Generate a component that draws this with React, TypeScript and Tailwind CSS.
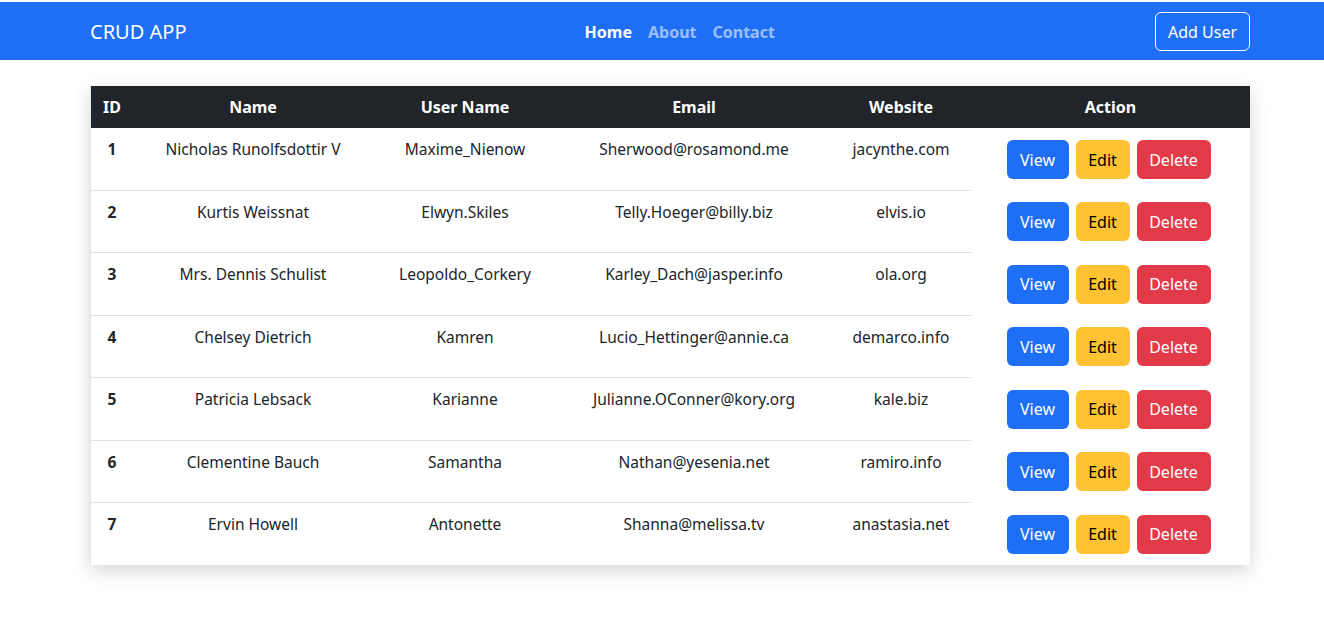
import React from "react";

const users = [
  { id: 1, name: "Nicholas Runolfsdottir V", username: "Maxime_Nienow", email: "Sherwood@rosamond.me", website: "jacynthe.com" },
  { id: 2, name: "Kurtis Weissnat", username: "Elwyn.Skiles", email: "Telly.Hoeger@billy.biz", website: "elvis.io" },
  { id: 3, name: "Mrs. Dennis Schulist", username: "Leopoldo_Corkery", email: "Karley_Dach@jasper.info", website: "ola.org" },
  { id: 4, name: "Chelsey Dietrich", username: "Kamren", email: "Lucio_Hettinger@annie.ca", website: "demarco.info" },
  { id: 5, name: "Patricia Lebsack", username: "Karianne", email: "Julianne.OConner@kory.org", website: "kale.biz" },
  { id: 6, name: "Clementine Bauch", username: "Samantha", email: "Nathan@yesenia.net", website: "ramiro.info" },
  { id: 7, name: "Ervin Howell", username: "Antonette", email: "Shanna@melissa.tv", website: "anastasia.net" },
];

export default function App() {
  return (
    <div className="min-h-screen bg-white text-[#212529] font-['Noto_Sans',sans-serif] text-[15.5px]">
      <nav className="mt-[2px] h-[58px] bg-[#1e6ff5]">
        <div className="ml-[90px] w-[1160px] h-full flex items-center pt-[1px]">
          <a className="text-white text-[20px] leading-none">CRUD APP</a>
          <ul className="mx-auto pl-[18px] flex items-center text-[16px]">
            <li className="px-2 font-bold text-white">Home</li>
            <li className="px-2 font-bold text-white/55">About</li>
            <li className="px-2 font-bold text-white/55">Contact</li>
          </ul>
          <button className="h-[39px] w-[95px] rounded-md border border-white text-white text-[16px]">Add User</button>
        </div>
      </nav>

      <div className="ml-[90px] w-[1160px] mt-[26px] shadow-[0_6px_18px_rgba(0,0,0,0.16)] border-l border-[#e5e5e5]">
        <table className="w-full border-collapse">
          <thead>
            <tr className="bg-[#212529] text-white h-[42px] text-[16px]">
              <th className="w-[42px] text-center font-bold">ID</th>
              <th className="w-[240px] text-center font-bold">Name</th>
              <th className="w-[184px] text-center font-bold">User Name</th>
              <th className="w-[274px] text-center font-bold">Email</th>
              <th className="w-[140px] text-center font-bold">Website</th>
              <th className="text-center font-bold">Action</th>
            </tr>
          </thead>
          <tbody>
            {users.map((u, i) => (
              <tr key={u.id} className="h-[62.45px] align-top">
                <td className={`pt-[10px] text-center font-bold ${i < users.length - 1 ? "border-b border-[#dee2e6]" : ""}`}>{u.id}</td>
                <td className={`pt-[10px] text-center ${i < users.length - 1 ? "border-b border-[#dee2e6]" : ""}`}>{u.name}</td>
                <td className={`pt-[10px] text-center ${i < users.length - 1 ? "border-b border-[#dee2e6]" : ""}`}>{u.username}</td>
                <td className={`pt-[10px] text-center ${i < users.length - 1 ? "border-b border-[#dee2e6]" : ""}`}>{u.email}</td>
                <td className={`pt-[10px] text-center ${i < users.length - 1 ? "border-b border-[#dee2e6]" : ""}`}>{u.website}</td>
                <td className="pt-[12px]">
                  <div className="flex justify-center gap-[7px] mr-[4px] text-[16px]">
                    <button className="h-[39px] w-[62px] rounded-md bg-[#1e6ff5] text-white">View</button>
                    <button className="h-[39px] w-[54px] rounded-md bg-[#ffc233] text-black">Edit</button>
                    <button className="h-[39px] w-[74px] rounded-md bg-[#e23a48] text-white">Delete</button>
                  </div>
                </td>
              </tr>
            ))}
          </tbody>
        </table>
      </div>
    </div>
  );
}
